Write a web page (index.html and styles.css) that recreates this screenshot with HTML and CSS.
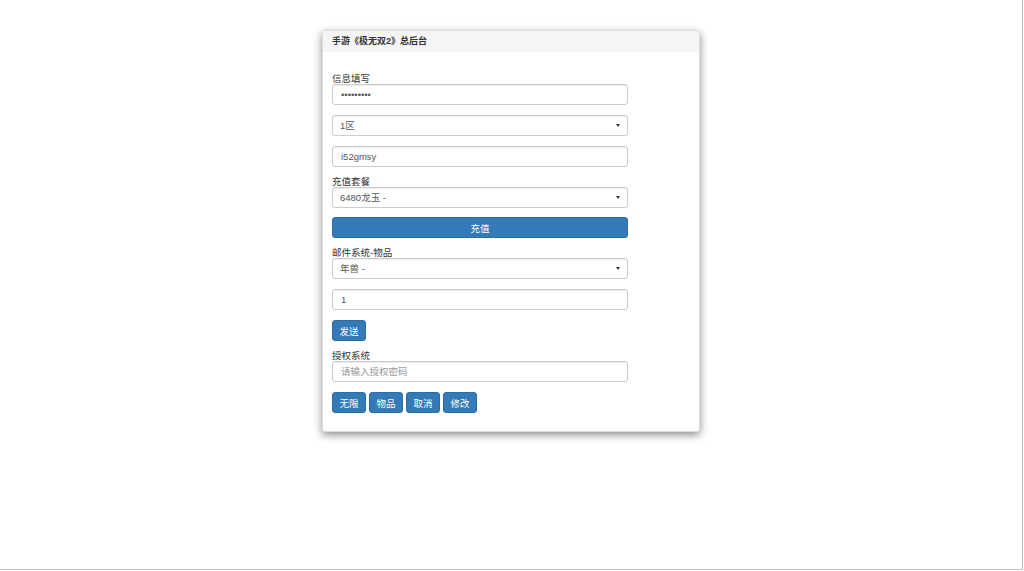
FILE: index.html
```html
<!DOCTYPE html>
<html lang="zh-CN">
<head>
    <meta charset="UTF-8">
    <meta name="viewport" content="width=device-width, initial-scale=1.0">
    <title>手游《极无双2》总后台</title>
    <link rel="stylesheet" href="styles.css">
</head>
<body>
<div class="frame">
    <div class="panel">
        <div class="panel-heading">手游《极无双2》总后台</div>
        <div class="panel-body">
            <form name="frmAdmin">
                <div class="form-group">
                    <label>信息填写</label>
                    <input type="password" class="form-control" value="123456789">
                </div>
                <div class="form-group">
                    <div class="select-wrap">
                        <select class="form-control">
                            <option>1区</option>
                        </select>
                    </div>
                </div>
                <div class="form-group">
                    <input type="text" class="form-control" value="i52gmsy">
                </div>
                <div class="form-group tight">
                    <label>充值套餐</label>
                    <div class="select-wrap">
                        <select class="form-control">
                            <option>6480龙玉 -</option>
                        </select>
                    </div>
                </div>
                <div class="form-group">
                    <button type="button" class="btn btn-block">充值</button>
                </div>
                <div class="form-group">
                    <label>邮件系统-物品</label>
                    <div class="select-wrap">
                        <select class="form-control">
                            <option>年兽 -</option>
                        </select>
                    </div>
                </div>
                <div class="form-group">
                    <input type="text" class="form-control" value="1">
                </div>
                <div class="form-group">
                    <button type="button" class="btn">发送</button>
                </div>
                <div class="form-group">
                    <label>授权系统</label>
                    <input type="text" class="form-control" placeholder="请输入授权密码">
                </div>
                <div class="form-group btn-row">
                    <button type="button" class="btn">无限</button>
                    <button type="button" class="btn">物品</button>
                    <button type="button" class="btn">取消</button>
                    <button type="button" class="btn">修改</button>
                </div>
            </form>
        </div>
    </div>
</div>
</body>
</html>
```

FILE: styles.css
```css
html, body {
    margin: 0;
    padding: 0;
    background-color: #fff;
}
body {
    font-family: "Liberation Sans", "Noto Sans CJK SC", sans-serif;
    font-size: 9px;
    color: #333;
}
.frame {
    box-sizing: border-box;
    width: 1023px;
    height: 570px;
    border-right: 1px solid #bdbdbd;
    border-bottom: 1px solid #c4c4c4;
    padding-top: 30px;
}
.panel {
    width: 378px;
    margin: 0 auto;
    box-sizing: border-box;
    border: 1px solid #ddd;
    border-radius: 3px;
    background-color: #fff;
    box-shadow: 0 3px 8px rgba(0, 0, 0, 0.45);
}
.panel-heading {
    height: 21px;
    line-height: 21px;
    padding: 0 9px;
    background-color: #f5f5f5;
    font-weight: bold;
    color: #333;
    border-radius: 3px 3px 0 0;
}
.panel-body {
    padding: 22px 9px 9px 9px;
}
.form-group {
    width: 296px;
    margin-bottom: 10px;
}
.form-group.tight {
    margin-bottom: 9px;
}
label {
    display: block;
    height: 10px;
    line-height: 10px;
    font-size: 9.5px;
    color: #333;
}
.form-control {
    display: block;
    box-sizing: border-box;
    width: 296px;
    height: 21px;
    padding: 0 8px;
    border: 1px solid #ccc;
    border-radius: 3px;
    font-family: "Liberation Sans", "Noto Sans CJK SC", sans-serif;
    font-size: 9.5px;
    color: #555;
    background-color: #fff;
    box-shadow: inset 0 1px 1px rgba(0, 0, 0, 0.075);
    outline: none;
}
.form-control::placeholder {
    color: #999;
}
select.form-control {
    -webkit-appearance: none;
    appearance: none;
    padding-left: 7px;
}
.select-wrap {
    position: relative;
}
.select-wrap::after {
    content: "";
    position: absolute;
    right: 8px;
    top: 9px;
    border-left: 2.5px solid transparent;
    border-right: 2.5px solid transparent;
    border-top: 3px solid #333;
}
.btn {
    box-sizing: border-box;
    height: 21px;
    min-width: 34px;
    padding: 0 6px;
    border: 1px solid #2e6da4;
    border-radius: 3px;
    background-color: #337ab7;
    color: #fff;
    font-family: "Liberation Sans", "Noto Sans CJK SC", sans-serif;
    font-size: 9.5px;
}
.btn-block {
    display: block;
    width: 296px;
}
.btn-row {
    display: flex;
    gap: 3px;
    margin-bottom: 9px;
}
```
